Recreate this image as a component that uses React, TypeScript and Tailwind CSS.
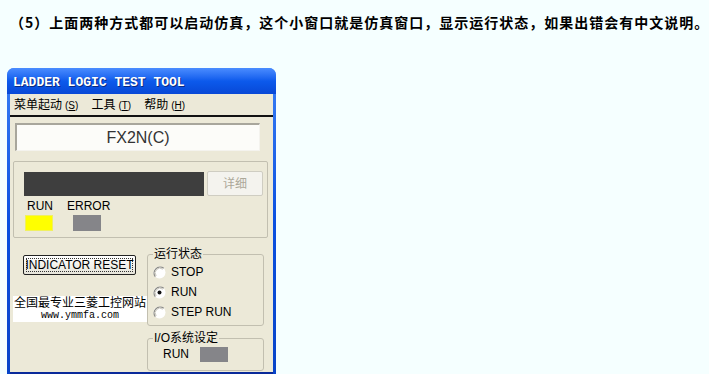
import React from "react";

const cjk = { fontFamily: '"Liberation Sans", "Noto Sans CJK SC", sans-serif' };
const heading = { fontFamily: '"Noto Sans CJK SC", sans-serif' };
const mono = { fontFamily: '"Liberation Mono", monospace' };

function Radio({ checked }: { checked?: boolean }) {
  return (
    <svg width="13" height="13" viewBox="0 0 13 13" className="shrink-0">
      <circle cx="6.5" cy="6.5" r="6" fill="#ffffff" />
      <path d="M2.3 10.7 A6 6 0 0 1 10.7 2.3" stroke="#8a8a86" strokeWidth="1.3" fill="none" />
      <path d="M3.2 9.8 A4.7 4.7 0 0 1 9.8 3.2" stroke="#c8c6bc" strokeWidth="1" fill="none" />
      {checked && <circle cx="6.5" cy="6.5" r="2" fill="#111" />}
    </svg>
  );
}

function Acc({ k }: { k: string }) {
  return (
    <span className="ml-[3px] text-[10px]">
      (<span className="underline">{k}</span>)
    </span>
  );
}

export default function App() {
  return (
    <div className="w-[709px] h-[374px] bg-[#f5ffff] overflow-hidden">
      <div
        className="pt-[14px] pl-[10px] text-[14px] leading-[16px] font-bold tracking-[1px] text-black whitespace-nowrap"
        style={heading}
      >
        （5）上面两种方式都可以启动仿真，这个小窗口就是仿真窗口，显示运行状态，如果出错会有中文说明。
      </div>

      <div className="ml-[7px] mt-[38px] w-[269px] h-[306px] rounded-t-[7px] bg-gradient-to-b from-[#3a7ff5] via-[#0a50e0] to-[#0844c8] flex flex-col">
        <div className="h-[26px] pl-[6px] pt-[3px] flex items-center rounded-t-[7px] bg-gradient-to-b from-[#4a8cff] via-[#0c5aec] to-[#0848d6]">
          <span
            className="text-white text-[13px] font-bold leading-[14px] whitespace-nowrap"
            style={{ fontFamily: '"Liberation Mono", "Liberation Serif", monospace', textShadow: "1px 1px 0 #0a2a80" }}
          >
            LADDER LOGIC TEST TOOL
          </span>
        </div>
        <div className="mx-[3px] flex-1 bg-[#ece9d8] flex flex-col border-b-[2px] border-[#0a2a9a]" style={cjk}>
          <div className="h-[23px] pl-[4px] flex items-center gap-[13px] text-[12px] text-black border-b-[2px] border-[#111] whitespace-nowrap">
            <span>菜单起动<Acc k="S" /></span>
            <span>工具<Acc k="T" /></span>
            <span>帮助<Acc k="H" /></span>
          </div>

          <div className="ml-[5px] mt-[6px] w-[245px] h-[28px] bg-[#fcfcf9] border-t-[2px] border-l-[2px] border-[#a8a69c] border-b border-r border-b-[#f4f3ee] border-r-[#f4f3ee] flex items-center justify-center">
            <span className="text-[16px] text-[#333] leading-[18px]" style={{ fontFamily: '"Liberation Sans", sans-serif' }}>
              FX2N(C)
            </span>
          </div>

          <div className="ml-[3px] mt-[10px] w-[255px] h-[77px] border border-[#c2bfb0] rounded-[2px] flex flex-col">
            <div className="ml-[10px] mt-[9px] flex items-start">
              <div className="w-[180px] h-[24px] bg-[#3e3e3e] mt-[1px]" />
              <div className="ml-[3px] w-[56px] h-[25px] bg-[#f4f3ee] border border-[#cfcdc2] rounded-[2px] flex items-center justify-center text-[12px] text-[#aca899]">
                详细
              </div>
            </div>
            <div className="flex mt-[4px]">
              <div className="ml-[11px] flex flex-col">
                <span className="pl-[2px] text-[12px] leading-[12px] text-black">RUN</span>
                <div className="mt-[3px] w-[28px] h-[16px] bg-[#ffff00] border border-[#f0f060]" />
              </div>
              <div className="ml-[14px] flex flex-col">
                <span className="text-[12px] leading-[12px] text-black">ERROR</span>
                <div className="ml-[6px] mt-[3px] w-[28px] h-[16px] bg-[#858589]" />
              </div>
            </div>
          </div>

          <div className="flex">
            <div className="w-[137px] flex flex-col">
              <div className="ml-[13px] mt-[17px] w-[113px] h-[20px] border border-[#222] rounded-[2px] bg-gradient-to-b from-[#ffffff] to-[#e6e4da] p-[2px]">
                <div className="w-full h-full border border-dotted border-[#333] flex items-center justify-center text-[12px] leading-[12px] text-black whitespace-nowrap">
                  INDICATOR RESET
                </div>
              </div>
              <div className="ml-[3px] mt-[21px] w-[134px] h-[26px] bg-white flex flex-col items-center">
                <span className="text-[12px] leading-[14px] text-black whitespace-nowrap" style={cjk}>
                  全国最专业三菱工控网站
                </span>
                <span className="text-[10px] leading-[11px] text-black" style={mono}>
                  www.ymmfa.com
                </span>
              </div>
            </div>

            <div className="w-[117px] flex flex-col">
              <fieldset className="mt-[9px] h-[79px] border border-[#c2bfb0] rounded-[3px] px-0 pb-[3px] m-0">
                <legend className="ml-[5px] px-[1px] text-[12px] leading-[14px] text-black">运行状态</legend>
                <div className="pt-[1px] flex flex-col text-[12px] text-black" style={{ fontFamily: '"Liberation Sans", sans-serif' }}>
                  <div className="h-[20px] flex items-center pl-[5px] gap-[5px]"><Radio /><span>STOP</span></div>
                  <div className="h-[20px] flex items-center pl-[5px] gap-[5px]"><Radio checked /><span>RUN</span></div>
                  <div className="h-[20px] flex items-center pl-[5px] gap-[5px]"><Radio /><span>STEP RUN</span></div>
                </div>
              </fieldset>
              <fieldset className="mt-[5px] h-[40px] border border-[#c2bfb0] rounded-[3px] px-0 m-0">
                <legend className="ml-[5px] px-[1px] text-[12px] leading-[14px] text-black">I/O系统设定</legend>
                <div className="h-[18px] pl-[15px] flex items-center text-[12px] text-black" style={{ fontFamily: '"Liberation Sans", sans-serif' }}>
                  <span>RUN</span>
                  <div className="ml-[11px] w-[28px] h-[15px] bg-[#858589]" />
                </div>
              </fieldset>
            </div>
          </div>
        </div>
      </div>
    </div>
  );
}
